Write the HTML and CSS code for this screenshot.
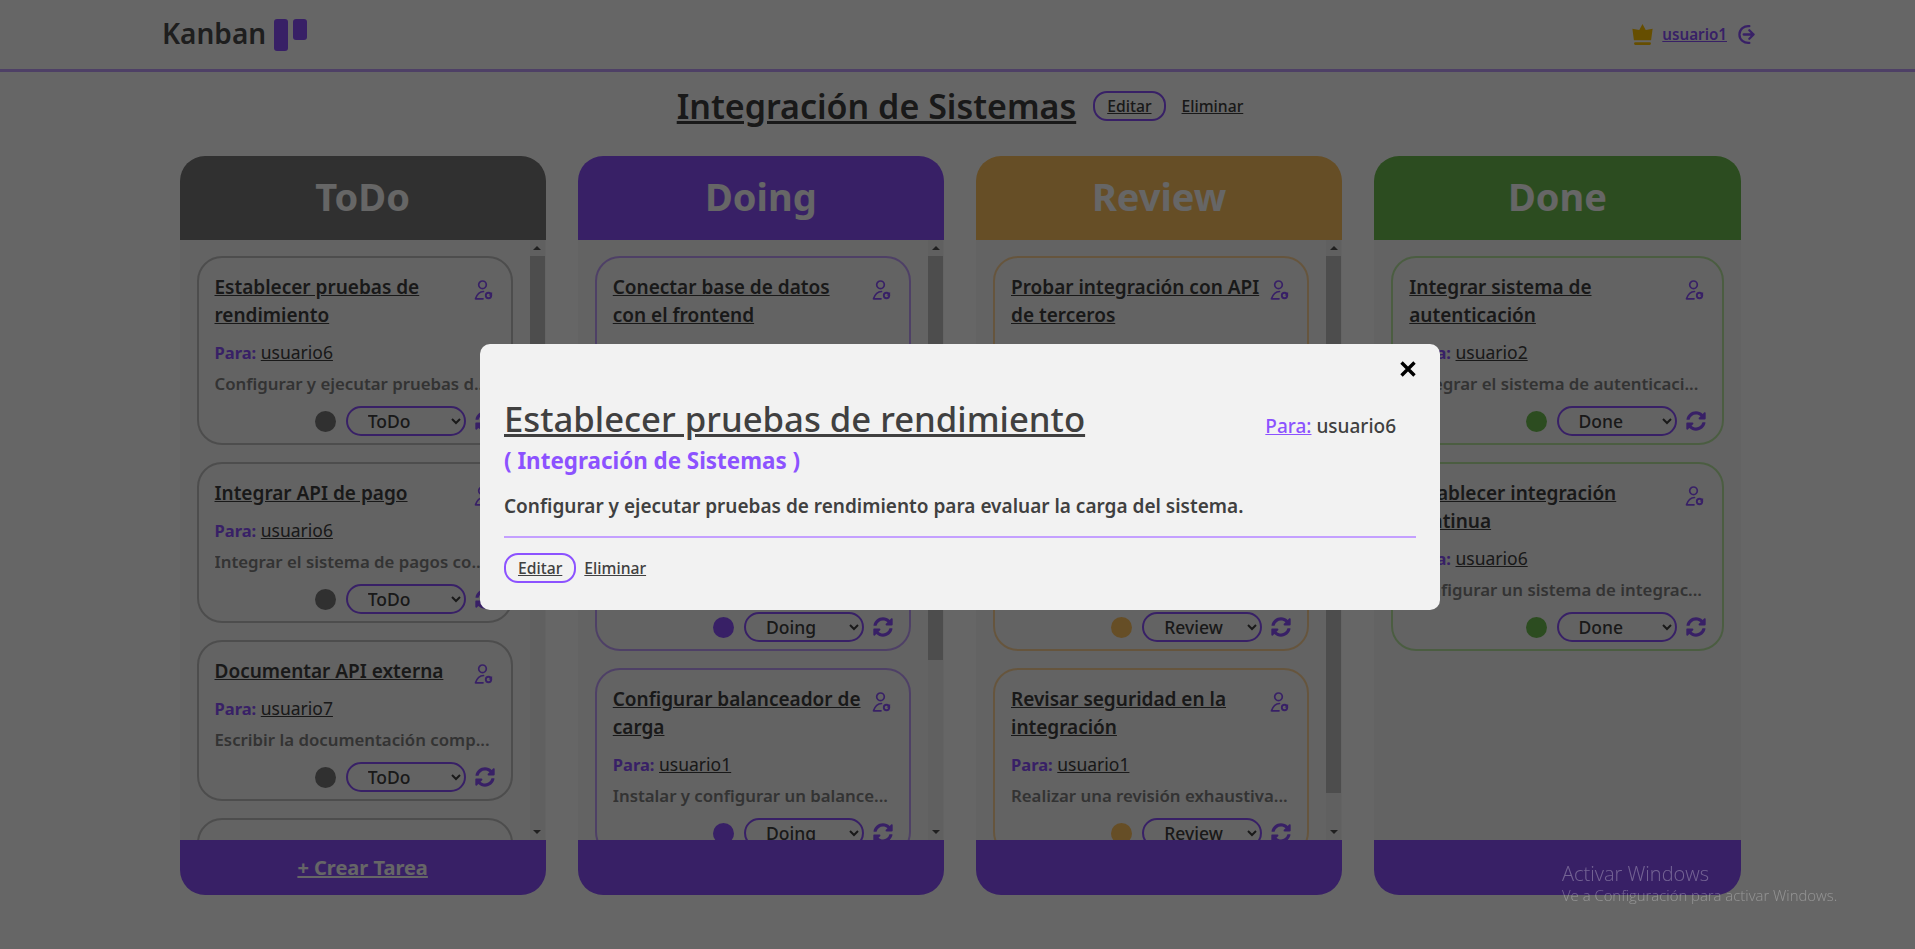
FILE: index.html
```html
<!DOCTYPE html>
<html lang="es">
<head>
  <meta charset="UTF-8" />
  <title>Kanban</title>
  <link rel="stylesheet" href="styles.css">
</head>
<body>
  <svg class="icon-defs" width="0" height="0">
    <symbol id="icon-sync" viewBox="0 0 512 512">
      <path fill="currentColor" d="M370.72 133.28C339.458 104.008 298.888 87.962 255.848 88c-77.458.068-144.328 53.178-162.791 126.85-1.344 5.363-6.122 9.15-11.651 9.15H24.103c-7.498 0-13.194-6.807-11.807-14.176C33.933 94.924 134.813 8 256 8c66.448 0 126.791 26.136 171.315 68.685L463.03 40.97C478.149 25.851 504 36.559 504 57.941V192c0 13.255-10.745 24-24 24H345.941c-21.382 0-32.09-25.851-16.971-40.971l41.75-41.749zM32 296h134.059c21.382 0 32.09 25.851 16.971 40.971l-41.75 41.75c31.262 29.273 71.835 45.319 114.876 45.28 77.418-.07 144.315-53.144 162.787-126.849 1.344-5.363 6.122-9.15 11.651-9.15h57.304c7.498 0 13.194 6.807 11.807 14.176C478.067 417.076 377.187 504 256 504c-66.448 0-126.791-26.136-171.315-68.685L48.97 471.03C33.851 486.149 8 475.441 8 454.059V320c0-13.255 10.745-24 24-24z"/>
    </symbol>
    <symbol id="icon-user" viewBox="0 0 20 20">
      <circle cx="9.500" cy="4.800" r="3.800" fill="none" stroke="currentColor" stroke-width="1.700"/>
      <path fill="none" stroke="currentColor" stroke-width="1.700" stroke-linecap="round" stroke-linejoin="round" d="M10.500 11.500c-3.700 0-6.500 2.800-8 7.300h7.500"/>
      <circle cx="15.500" cy="15.500" r="2.700" fill="none" stroke="currentColor" stroke-width="1.900"/>
      <path fill="currentColor" d="M15.500 15.500h3.600v-3.400z"/>
    </symbol>
  </svg>

  <div class="page">
    <nav class="navbar">
      <a class="brand"><span class="brand-text">Kanban</span>
        <span class="brand-logo"><i class="bar-long"></i><i class="bar-short"></i></span>
      </a>
      <div class="nav-user">
        <svg class="crown" viewBox="0 0 22 24">
          <path fill="currentColor" d="M11 1l3.400 6.400L21.600 6 20 18H2L.4 6l7.200 1.400z"/>
          <rect fill="currentColor" x="2.200" y="20" width="17.600" height="3" rx="1.200"/>
        </svg>
        <a class="nav-name">usuario1</a>
        <svg class="logout" viewBox="0 0 18 22">
          <path fill="none" stroke="currentColor" stroke-width="2.400" stroke-linecap="round" stroke-linejoin="round" d="M12 2.200C6.400 1.600 1.500 5.500 1.500 11s4.900 9.400 10.500 8.800M6 11h10.500M12 6.500l4.500 4.500-4.500 4.500"/>
        </svg>
      </div>
    </nav>

    <header class="board-head">
      <h1 class="board-title">Integración de Sistemas</h1>
      <a class="btn-pill">Editar</a>
      <a class="btn-link">Eliminar</a>
    </header>

    <main class="board">
      <section class="column todo">
        <h2 class="column-title">ToDo</h2>
        <div class="column-body">
          <div class="card-list">
            <article class="card">
              <div class="card-top"><a class="card-title">Establecer pruebas de rendimiento</a><svg class="icon-user"><use href="#icon-user"/></svg></div>
              <p class="card-to"><b>Para:</b> <a>usuario6</a></p>
              <p class="card-desc">Configurar y ejecutar pruebas d...</p>
              <div class="card-foot"><span class="dot"></span><select class="state"><option>ToDo</option></select><svg class="icon-sync"><use href="#icon-sync"/></svg></div>
            </article>
            <article class="card">
              <div class="card-top"><a class="card-title">Integrar API de pago</a><svg class="icon-user"><use href="#icon-user"/></svg></div>
              <p class="card-to"><b>Para:</b> <a>usuario6</a></p>
              <p class="card-desc">Integrar el sistema de pagos co...</p>
              <div class="card-foot"><span class="dot"></span><select class="state"><option>ToDo</option></select><svg class="icon-sync"><use href="#icon-sync"/></svg></div>
            </article>
            <article class="card">
              <div class="card-top"><a class="card-title">Documentar API externa</a><svg class="icon-user"><use href="#icon-user"/></svg></div>
              <p class="card-to"><b>Para:</b> <a>usuario7</a></p>
              <p class="card-desc">Escribir la documentación comp...</p>
              <div class="card-foot"><span class="dot"></span><select class="state"><option>ToDo</option></select><svg class="icon-sync"><use href="#icon-sync"/></svg></div>
            </article>
            <article class="card card-empty"></article>
          </div>
          <div class="scrollbar">
            <span class="arrow-up"></span>
            <div class="track"><div class="thumb" style="height:240px"></div></div>
            <span class="arrow-down"></span>
          </div>
        </div>
        <div class="column-foot"><a class="new-task">+ Crear Tarea</a></div>
      </section>

      <section class="column doing">
        <h2 class="column-title">Doing</h2>
        <div class="column-body">
          <div class="card-list">
            <article class="card">
              <div class="card-top"><a class="card-title">Conectar base de datos con el frontend</a><svg class="icon-user"><use href="#icon-user"/></svg></div>
              <p class="card-to"><b>Para:</b> <a>usuario3</a></p>
              <p class="card-desc">Conectar la base de datos con...</p>
              <div class="card-foot"><span class="dot"></span><select class="state"><option>Doing</option></select><svg class="icon-sync"><use href="#icon-sync"/></svg></div>
            </article>
            <article class="card">
              <div class="card-top"><a class="card-title">Implementar servicios de la API REST</a><svg class="icon-user"><use href="#icon-user"/></svg></div>
              <p class="card-to"><b>Para:</b> <a>usuario4</a></p>
              <p class="card-desc">Implementar los servicios de la...</p>
              <div class="card-foot"><span class="dot"></span><select class="state"><option>Doing</option></select><svg class="icon-sync"><use href="#icon-sync"/></svg></div>
            </article>
            <article class="card">
              <div class="card-top"><a class="card-title">Configurar balanceador de carga</a><svg class="icon-user"><use href="#icon-user"/></svg></div>
              <p class="card-to"><b>Para:</b> <a>usuario1</a></p>
              <p class="card-desc">Instalar y configurar un balance...</p>
              <div class="card-foot"><span class="dot"></span><select class="state"><option>Doing</option></select><svg class="icon-sync"><use href="#icon-sync"/></svg></div>
            </article>
          </div>
          <div class="scrollbar">
            <span class="arrow-up"></span>
            <div class="track"><div class="thumb" style="height:404px"></div></div>
            <span class="arrow-down"></span>
          </div>
        </div>
        <div class="column-foot"></div>
      </section>

      <section class="column review">
        <h2 class="column-title">Review</h2>
        <div class="column-body">
          <div class="card-list">
            <article class="card">
              <div class="card-top"><a class="card-title">Probar integración con API de terceros</a><svg class="icon-user"><use href="#icon-user"/></svg></div>
              <p class="card-to"><b>Para:</b> <a>usuario5</a></p>
              <p class="card-desc">Probar la integración con los...</p>
              <div class="card-foot"><span class="dot"></span><select class="state"><option>Review</option></select><svg class="icon-sync"><use href="#icon-sync"/></svg></div>
            </article>
            <article class="card">
              <div class="card-top"><a class="card-title">Verificar compatibilidad de sistemas</a><svg class="icon-user"><use href="#icon-user"/></svg></div>
              <p class="card-to"><b>Para:</b> <a>usuario2</a></p>
              <p class="card-desc">Verificar la compatibilidad entre...</p>
              <div class="card-foot"><span class="dot"></span><select class="state"><option>Review</option></select><svg class="icon-sync"><use href="#icon-sync"/></svg></div>
            </article>
            <article class="card">
              <div class="card-top"><a class="card-title">Revisar seguridad en la integración</a><svg class="icon-user"><use href="#icon-user"/></svg></div>
              <p class="card-to"><b>Para:</b> <a>usuario1</a></p>
              <p class="card-desc">Realizar una revisión exhaustiva...</p>
              <div class="card-foot"><span class="dot"></span><select class="state"><option>Review</option></select><svg class="icon-sync"><use href="#icon-sync"/></svg></div>
            </article>
          </div>
          <div class="scrollbar">
            <span class="arrow-up"></span>
            <div class="track"><div class="thumb" style="height:537px"></div></div>
            <span class="arrow-down"></span>
          </div>
        </div>
        <div class="column-foot"></div>
      </section>

      <section class="column done">
        <h2 class="column-title">Done</h2>
        <div class="column-body">
          <div class="card-list">
            <article class="card">
              <div class="card-top"><a class="card-title">Integrar sistema de autenticación</a><svg class="icon-user"><use href="#icon-user"/></svg></div>
              <p class="card-to"><b>Para:</b> <a>usuario2</a></p>
              <p class="card-desc">Integrar el sistema de autenticaci...</p>
              <div class="card-foot"><span class="dot"></span><select class="state"><option>Done</option></select><svg class="icon-sync"><use href="#icon-sync"/></svg></div>
            </article>
            <article class="card">
              <div class="card-top"><a class="card-title">Establecer integración continua</a><svg class="icon-user"><use href="#icon-user"/></svg></div>
              <p class="card-to"><b>Para:</b> <a>usuario6</a></p>
              <p class="card-desc">Configurar un sistema de integrac...</p>
              <div class="card-foot"><span class="dot"></span><select class="state"><option>Done</option></select><svg class="icon-sync"><use href="#icon-sync"/></svg></div>
            </article>
          </div>
        </div>
        <div class="column-foot"></div>
      </section>
    </main>
  </div>

  <div class="overlay"></div>

  <div class="modal">
    <button class="modal-close">
      <svg viewBox="0 0 16 16"><path fill="none" stroke="currentColor" stroke-width="3.400" d="M1.500 1.500l13 13M14.500 1.500l-13 13"/></svg>
    </button>
    <div class="modal-head">
      <div>
        <h2 class="modal-title">Establecer pruebas de rendimiento</h2>
        <p class="modal-project">( Integración de Sistemas )</p>
      </div>
      <p class="modal-to"><a>Para:</a> usuario6</p>
    </div>
    <p class="modal-desc">Configurar y ejecutar pruebas de rendimiento para evaluar la carga del sistema.</p>
    <div class="modal-actions">
      <a class="btn-pill">Editar</a>
      <a class="btn-link">Eliminar</a>
    </div>
  </div>

  <div class="watermark">
    <p class="watermark-big">Activar Windows</p>
    <p>Ve a Configuración para activar Windows.</p>
  </div>
</body>
</html>
```

FILE: styles.css
```css
* {
  box-sizing: border-box;
}
body {
  margin: 0;
  height: 949px;
  overflow: hidden;
  background: #fff;
  font-family: 'Noto Sans', sans-serif;
  color: #404040;
}
p, h1, h2 {
  margin: 0;
}
a {
  text-decoration: underline;
}
.icon-defs {
  position: absolute;
}
.page {
  width: 1920px;
}

/* navbar */
.navbar {
  height: 72px;
  padding: 0 165px 0 162px;
  border-bottom: 3px solid #c4a0ff;
  display: flex;
  align-items: center;
  justify-content: space-between;
}
.brand {
  display: flex;
  align-items: center;
  gap: 8px;
  text-decoration: none;
  color: #4d4d4d;
}
.brand-text {
  font-size: 28px;
  font-weight: 600;
  margin-top: -4px;
}
.brand-logo {
  display: flex;
  gap: 5px;
  align-items: flex-start;
}
.brand-logo i {
  display: block;
  width: 14px;
  background: #8c52ff;
  border-radius: 3px;
}
.bar-long {
  height: 32px;
}
.bar-short {
  height: 21px;
}
.nav-user {
  display: flex;
  align-items: center;
  gap: 9px;
}
.crown {
  width: 21px;
  height: 23px;
  color: #ffc400;
}
.nav-name {
  font-size: 15.200px;
  font-weight: 600;
  color: #8c52ff;
  margin-right: 2px;
  margin-top: -2px;
}
.logout {
  width: 17px;
  height: 21px;
  color: #8c52ff;
}

/* board */
.board-head {
  height: 84px;
  display: flex;
  align-items: center;
  justify-content: center;
  gap: 16px;
  padding-bottom: 16px;
}
.board-title {
  font-size: 34px;
  font-weight: 600;
  text-decoration: underline;
  margin-right: 1px;
}
.btn-pill {
  border: 2px solid #8c52ff;
  border-radius: 14px;
  padding: 2px 12px;
  font-size: 15.700px;
  font-weight: 500;
}
.btn-link {
  font-size: 15.700px;
  font-weight: 500;
}
.board {
  padding-left: 179.5px;
  display: grid;
  grid-template-columns: repeat(4, 366.25px);
  gap: 32px;
}
.column {
  height: 739px;
  display: flex;
  flex-direction: column;
}
.column-title {
  height: 84px;
  padding-bottom: 4px;
  border-radius: 25px 25px 0 0;
  display: flex;
  align-items: center;
  justify-content: center;
  font-size: 38px;
  font-weight: 700;
  color: #fff;
}
.column-body {
  height: 600px;
  display: flex;
  background: #f7f7f7;
}
.card-list {
  flex: 1;
  min-width: 0;
  overflow: hidden;
  padding: 16px 17px 0;
  display: flex;
  flex-direction: column;
  gap: 17px;
}
.column-foot {
  height: 55px;
  border-radius: 0 0 25px 25px;
  background: #8c52ff;
  display: flex;
  align-items: center;
  justify-content: center;
}
.new-task {
  color: #fff;
  font-size: 20px;
  font-weight: 700;
}

/* fake scrollbar */
.scrollbar {
  width: 15px;
  margin-right: 1px;
  background: #f1f1f1;
  display: flex;
  flex-direction: column;
  align-items: center;
}
.arrow-up, .arrow-down {
  flex: none;
  width: 0;
  height: 0;
  margin: 6px 0;
  border-left: 4px solid transparent;
  border-right: 4px solid transparent;
}
.arrow-up {
  border-bottom: 4px solid #505050;
}
.arrow-down {
  border-top: 4px solid #505050;
}
.track {
  flex: 1;
  width: 100%;
}
.thumb {
  background: #c1c1c1;
}

/* cards */
.card {
  flex: none;
  border: 2px solid #c4a0ff;
  border-radius: 25px;
  padding: 15px 16px 7px;
}
.card-empty {
  height: 160px;
}
.card-top {
  display: flex;
  justify-content: space-between;
  gap: 10px;
}
.card-title {
  font-size: 19px;
  font-weight: 600;
  line-height: 28px;
}
.icon-user {
  flex: none;
  width: 20px;
  height: 20px;
  margin: 7px 2px 0 0;
  color: #8c52ff;
}
.card-to {
  margin-top: 9px;
  font-size: 17.500px;
  line-height: 28px;
}
.card-to b {
  color: #8c52ff;
  font-weight: 700;
  font-size: 16.500px;
}
.card-desc {
  margin-top: 4px;
  font-size: 16.800px;
  font-weight: 600;
  line-height: 26px;
  color: #808080;
  white-space: nowrap;
  overflow: hidden;
}
.card-foot {
  margin-top: 9px;
  display: flex;
  align-items: center;
  justify-content: flex-end;
  gap: 9px;
}
.dot {
  width: 21px;
  height: 21px;
  margin-right: 1px;
  border-radius: 50%;
}
.state {
  width: 120px;
  height: 30px;
  padding-left: 16px;
  border: 2px solid #8c52ff;
  border-radius: 15px;
  background: transparent;
  font-family: inherit;
  font-size: 17.500px;
  font-weight: 500;
  color: #404040;
}
.icon-sync {
  width: 20px;
  height: 20px;
  color: #8c52ff;
}

/* column colours */
.todo .column-title { background: #787878; }
.todo .card { border-color: #c0c0c0; }
.todo .dot { background: #787878; }
.doing .column-title { background: #8c52ff; }
.doing .card { border-color: #c4a0ff; }
.doing .dot { background: #8c52ff; }
.review .column-title { background: #ffc25f; }
.review .card { border-color: #ffd59a; }
.review .dot { background: #ffc25f; }
.done .column-title { background: #6fbf50; }
.done .card { border-color: #bbe8a4; }
.done .dot { background: #6fbf50; }

/* overlay + modal */
.overlay {
  position: fixed;
  inset: 0;
  background: rgba(0, 0, 0, 0.6);
}
.modal {
  position: fixed;
  left: 480px;
  top: 344px;
  width: 960px;
  height: 266px;
  background: #f2f2f2;
  border-radius: 10px;
  padding: 52px 24px 0;
}
.modal-close {
  position: absolute;
  top: 17px;
  right: 24px;
  width: 16px;
  height: 16px;
  border: none;
  background: none;
  padding: 0;
  color: #000;
}
.modal-close svg {
  display: block;
}
.modal-head {
  display: flex;
  justify-content: space-between;
}
.modal-title {
  font-size: 34.700px;
  font-weight: 500;
  line-height: 46px;
  text-decoration: underline;
}
.modal-project {
  margin-top: 4px;
  font-size: 22.400px;
  font-weight: 700;
  line-height: 30px;
  color: #8c52ff;
}
.modal-to {
  margin: 17px 20px 0 0;
  font-size: 19px;
  font-weight: 500;
}
.modal-to a {
  color: #8c52ff;
}
.modal-desc {
  margin-top: 17px;
  padding-bottom: 17px;
  border-bottom: 2px solid #c4a0ff;
  font-size: 19px;
  font-weight: 600;
}
.modal-actions {
  margin-top: 15px;
  display: flex;
  align-items: center;
  gap: 8px;
}

/* windows watermark */
.watermark {
  position: fixed;
  left: 1562px;
  top: 860px;
  color: rgba(255, 255, 255, 0.3);
  font-family: 'Open Sans', sans-serif;
  font-size: 14.900px;
  font-weight: 300;
}
.watermark-big {
  font-size: 20px;
  margin-bottom: -2px;
}
```
